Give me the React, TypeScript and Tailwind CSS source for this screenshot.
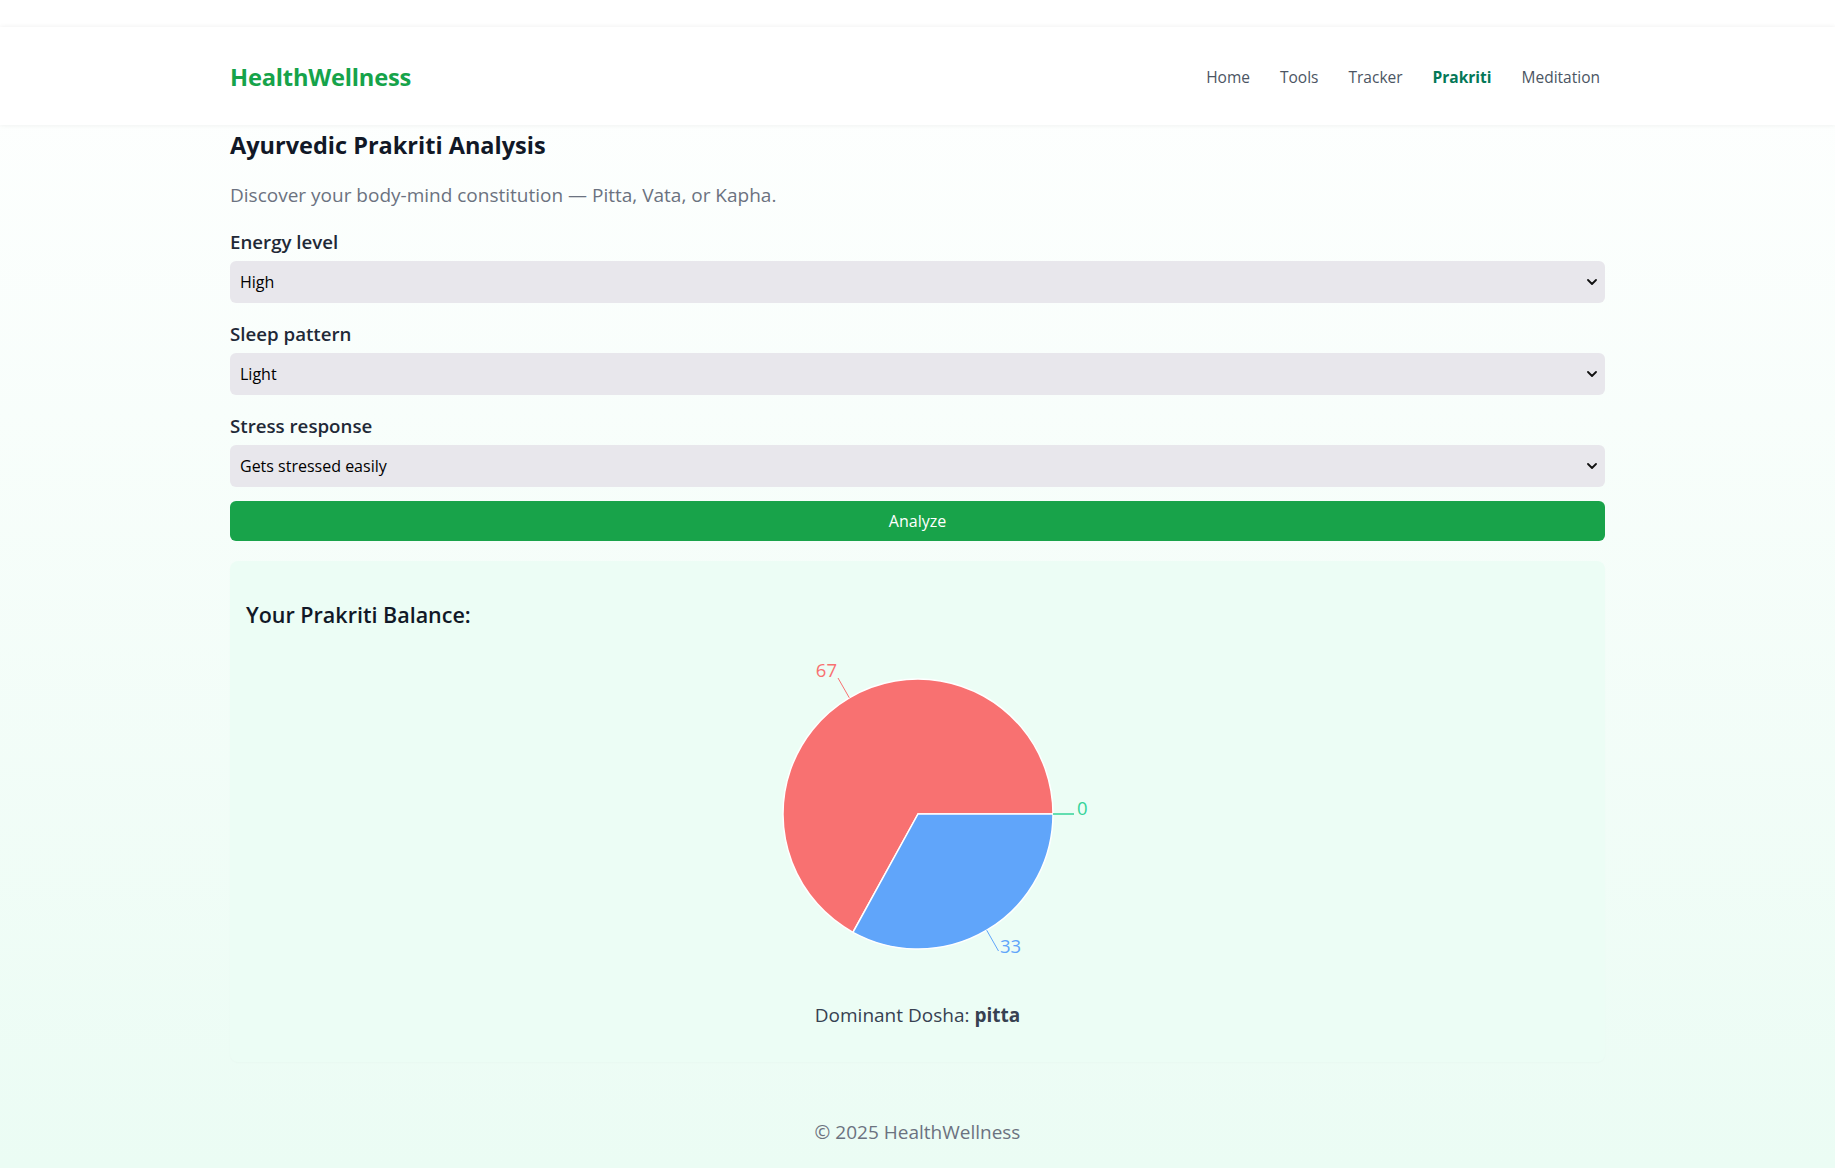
import React from "react";

function Chevron() {
  return (
    <svg
      className="pointer-events-none absolute right-[8px] top-1/2 -translate-y-1/2"
      width="10"
      height="7"
      viewBox="0 0 10 7"
      fill="none"
    >
      <path d="M1 1.5 L5 5.5 L9 1.5" stroke="#111" strokeWidth="1.8" strokeLinecap="round" strokeLinejoin="round" />
    </svg>
  );
}

function Field({ label, value, options }: { label: string; value: string; options: string[] }) {
  return (
    <div className="mt-[17px] first:mt-[19px]">
      <label className="block text-[18.7px] leading-[28px] font-semibold text-[#1f2937] mb-[5px]">{label}</label>
      <div className="relative">
        <select
          defaultValue={value}
          className="appearance-none w-full h-[42px] rounded-md bg-[#e8e7ec] pl-[10px] pr-8 text-[16px] text-black outline-none"
        >
          {options.map((o) => (
            <option key={o}>{o}</option>
          ))}
        </select>
        <Chevron />
      </div>
    </div>
  );
}

function Pie() {
  const cx = 200;
  const cy = 173;
  const r = 135;
  const a = (241.2 * Math.PI) / 180;
  const px = cx + r * Math.cos(a);
  const py = cy - r * Math.sin(a);
  return (
    <svg width="400" height="340" viewBox="0 0 400 340" className="mx-auto mt-[10px] block">
      <path
        d={`M${cx},${cy} L${cx + r},${cy} A${r},${r} 0 1 0 ${px},${py} Z`}
        fill="#f87171"
        stroke="#fff"
        strokeWidth="1.5"
      />
      <path
        d={`M${cx},${cy} L${px},${py} A${r},${r} 0 0 0 ${cx + r},${cy} Z`}
        fill="#60a5fa"
        stroke="#fff"
        strokeWidth="1.5"
      />
      <line x1="131.3" y1="56.8" x2="120" y2="37" stroke="#f87171" strokeWidth="1" />
      <line x1="268.7" y1="289.2" x2="280.5" y2="310" stroke="#60a5fa" strokeWidth="1" />
      <line x1="335" y1="173" x2="356" y2="173" stroke="#34d399" strokeWidth="1.5" />
      <text x="119" y="28" textAnchor="end" dominantBaseline="central" fill="#f87171" fontSize="18.5" fontFamily="'Open Sans', sans-serif">
        67
      </text>
      <text x="282" y="304" textAnchor="start" dominantBaseline="central" fill="#60a5fa" fontSize="18.5" fontFamily="'Open Sans', sans-serif">
        33
      </text>
      <text x="359" y="166" textAnchor="start" dominantBaseline="central" fill="#34d399" fontSize="18.5" fontFamily="'Open Sans', sans-serif">
        0
      </text>
    </svg>
  );
}

export default function App() {
  return (
    <div className="min-h-screen bg-gradient-to-b from-white to-[#ebfcf4] font-['Open_Sans',sans-serif]">
      <div className="h-[27px] bg-white" />
      <header className="relative h-[98px] bg-white shadow-[0_0_5px_rgba(0,0,0,0.07)]">
        <div className="mx-auto flex h-full w-[1375px] items-center justify-between pt-[4px]">
          <div className="text-[23.7px] font-bold text-[#16a34a] tracking-[-0.2px]">HealthWellness</div>
          <nav className="flex items-center gap-[30px] pr-[5px] text-[15.5px] text-[#4b5563]">
            <span>Home</span>
            <span>Tools</span>
            <span>Tracker</span>
            <span className="font-bold text-[#047857]">Prakriti</span>
            <span>Meditation</span>
          </nav>
        </div>
      </header>
      <main className="mx-auto w-[1375px] pt-[4px]">
        <h1 className="text-[23.5px] leading-[32px] font-bold text-[#111827]">Ayurvedic Prakriti Analysis</h1>
        <p className="mt-5 text-[19px] leading-[28px] text-[#6b7280]">
          Discover your body-mind constitution — Pitta, Vata, or Kapha.
        </p>
        <div>
          <Field label="Energy level" value="High" options={["High", "Moderate", "Low"]} />
          <Field label="Sleep pattern" value="Light" options={["Light", "Moderate", "Deep"]} />
          <Field
            label="Stress response"
            value="Gets stressed easily"
            options={["Gets stressed easily", "Gets irritated", "Stays calm"]}
          />
        </div>
        <button className="mt-[14px] h-[40px] w-full rounded-md bg-[#18a34a] text-[16px] text-white">Analyze</button>

        <section className="mt-5 rounded-lg bg-[#ecfdf5] px-4 pt-4 pb-[33px] shadow-[0_1px_2px_rgba(0,0,0,0.02)]">
          <h3 className="mt-[22px] text-[21.5px] leading-[32px] font-semibold text-[#111827]">Your Prakriti Balance:</h3>
          <Pie />
          <p className="mt-5 text-center text-[19px] leading-[28px] text-[#374151]">
            Dominant Dosha: <span className="font-bold">pitta</span>
          </p>
        </section>
      </main>
      <footer className="pt-[56px] pb-[22px] text-center text-[19px] leading-[28px] text-[#6b7280]">
        © 2025 HealthWellness
      </footer>
    </div>
  );
}
